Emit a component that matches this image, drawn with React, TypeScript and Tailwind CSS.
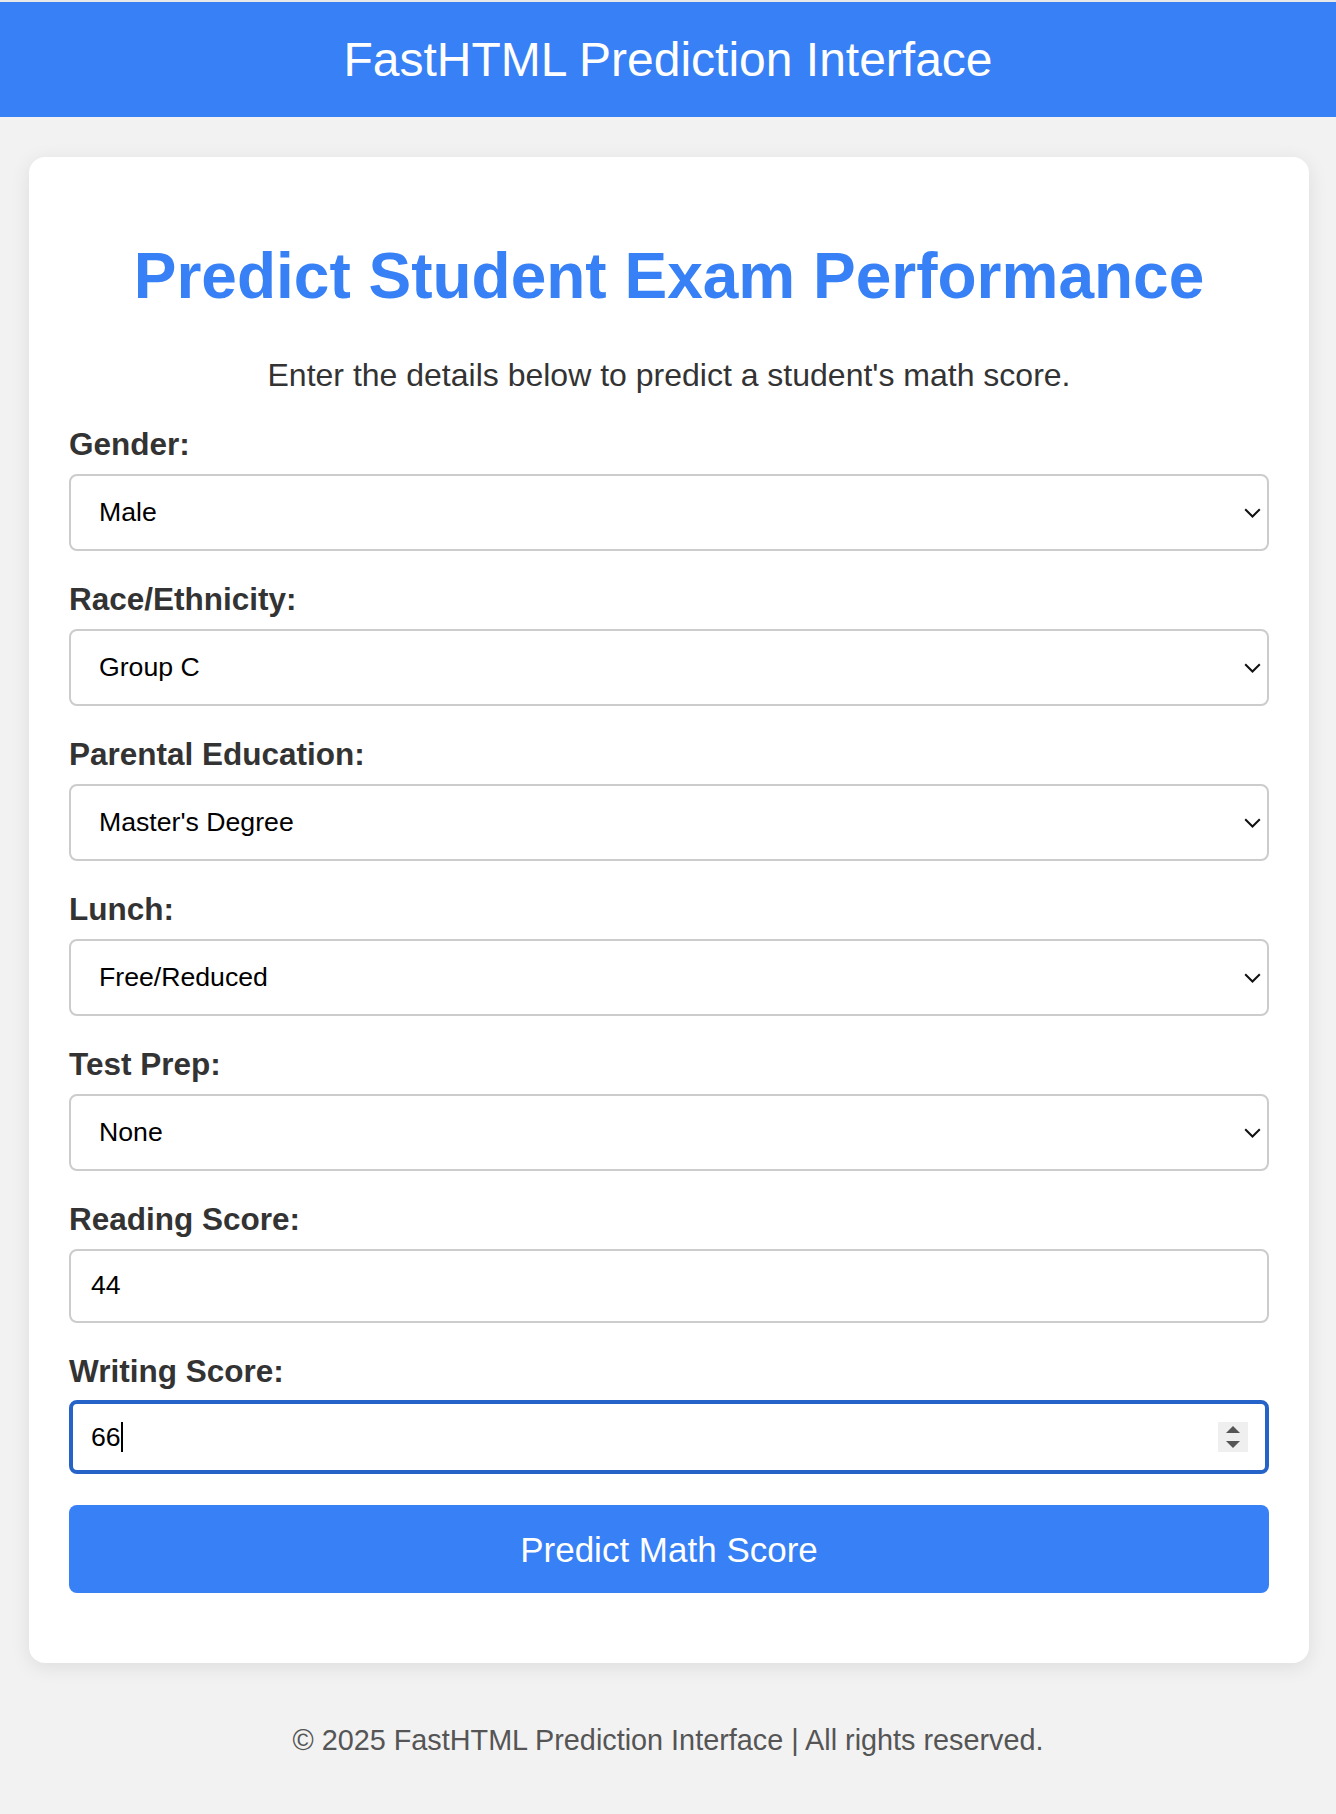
import React from 'react';

interface SelectFieldProps {
  label: string;
  value: string;
  options: string[];
}

const Chevron = () => (
  <svg
    className="pointer-events-none absolute right-[8px] top-[34px]"
    width="17"
    height="10"
    viewBox="0 0 17 10"
    fill="none"
  >
    <path d="M1.2 1.2 L8.5 8.5 L15.8 1.2" stroke="#111" strokeWidth="2" />
  </svg>
);

const SelectField: React.FC<SelectFieldProps> = ({ label, value, options }) => (
  <div className="mb-[33px]">
    <label className="block text-[31.5px] leading-none font-bold text-[#333]">{label}</label>
    <div className="relative mt-[13px]">
      <select
        defaultValue={value}
        className="block w-full h-[77.5px] appearance-none rounded-lg border-2 border-[#ccc] bg-white pl-[28px] pr-10 text-[26.67px] text-black outline-none"
      >
        {options.map(opt => (
          <option key={opt} value={opt}>
            {opt}
          </option>
        ))}
      </select>
      <Chevron />
    </div>
  </div>
);

const App: React.FC = () => {
  return (
    <div className="min-h-[1814px] border-t-2 border-[#e8e8e8] bg-[#f2f2f2] font-['Liberation_Sans',Arial,sans-serif]">
      <header className="flex h-[115px] items-center justify-center bg-[#3780f5]">
        <h1 className="text-[48px] leading-none font-normal text-white">FastHTML Prediction Interface</h1>
      </header>

      <main className="ml-[29px] mr-[27px] mt-10 rounded-2xl bg-white px-10 pt-[87px] pb-[70px] shadow-[0_4px_20px_rgba(0,0,0,0.09)]">
        <h2 className="text-center text-[64px] leading-none font-bold text-[#3780f5]">
          Predict Student Exam Performance
        </h2>
        <p className="mt-[51px] text-center text-[32px] leading-none text-[#333]">
          Enter the details below to predict a student's math score.
        </p>

        <form className="mt-[38px]" onSubmit={e => e.preventDefault()}>
          <SelectField label="Gender:" value="Male" options={['Male', 'Female']} />
          <SelectField
            label="Race/Ethnicity:"
            value="Group C"
            options={['Group A', 'Group B', 'Group C', 'Group D', 'Group E']}
          />
          <SelectField
            label="Parental Education:"
            value="Master's Degree"
            options={[
              'Some High School',
              'High School',
              'Some College',
              "Associate's Degree",
              "Bachelor's Degree",
              "Master's Degree",
            ]}
          />
          <SelectField label="Lunch:" value="Free/Reduced" options={['Standard', 'Free/Reduced']} />
          <SelectField label="Test Prep:" value="None" options={['None', 'Completed']} />

          <div className="mb-[33px]">
            <label className="block text-[31.5px] leading-none font-bold text-[#333]">Reading Score:</label>
            <input
              type="text"
              defaultValue="44"
              readOnly
              className="mt-[13px] block h-[74px] w-full rounded-lg border-2 border-[#ccc] bg-white px-[20px] text-[26.67px] text-black outline-none"
            />
          </div>

          <div>
            <label className="block text-[31.5px] leading-none font-bold text-[#333]">Writing Score:</label>
            <div className="relative mt-[13px]">
              <input
                type="text"
                defaultValue="66"
                readOnly
                className="block h-[74px] w-full rounded-lg border-4 border-[#2663c8] bg-white px-[18px] text-[26.67px] text-black outline-none"
              />
              {/* caret */}
              <span className="absolute left-[52px] top-[22px] h-[30px] w-[2px] bg-black" />
              {/* number spinner */}
              <span className="absolute right-[21px] top-[22px] flex h-[30px] w-[30px] items-center justify-center bg-[#efefef]">
                <svg width="30" height="30" viewBox="0 0 30 30">
                  <polygon points="8,11 15,4 22,11" fill="#555" />
                  <polygon points="8,19 22,19 15,26" fill="#555" />
                </svg>
              </span>
            </div>
          </div>

          <button
            type="submit"
            className="mt-[31px] block h-[88px] w-full rounded-lg bg-[#3780f5] text-[35px] leading-none text-white"
          >
            Predict Math Score
          </button>
        </form>
      </main>

      <footer className="pt-[63px] text-center text-[28.8px] leading-none text-[#555]">
        © 2025 FastHTML Prediction Interface | All rights reserved.
      </footer>
    </div>
  );
};

export default App;
